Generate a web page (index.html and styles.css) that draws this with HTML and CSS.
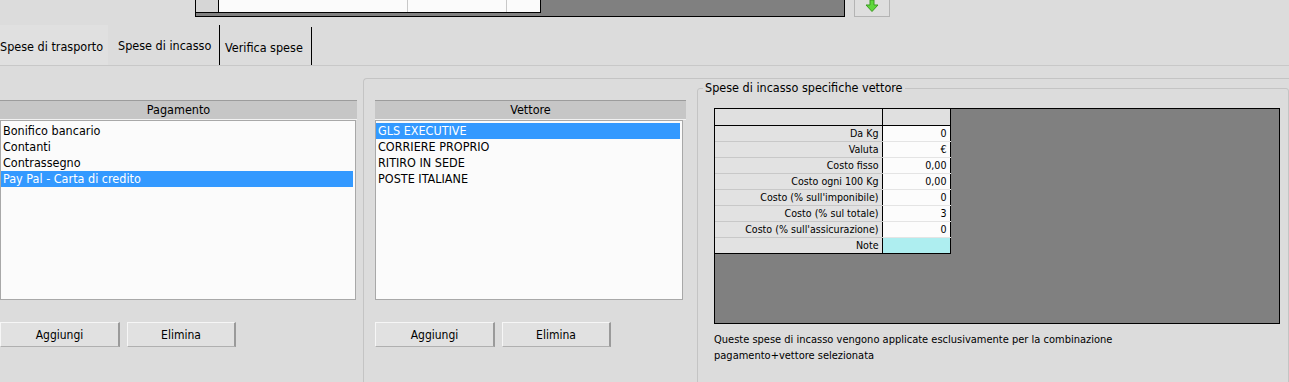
FILE: index.html
```html
<!DOCTYPE html>
<html lang="it">
<head>
    <meta charset="UTF-8">
    <title>Spese di incasso</title>
    <link rel="stylesheet" href="styles.css">
</head>
<body>

    <div class="top">
        <div class="top-grid">
            <div class="tg-row">
                <div class="tg-head"></div>
                <div class="tg-cell c1"></div>
                <div class="tg-cell c2"></div>
                <div class="tg-cell c3"></div>
            </div>
        </div>
        <button class="arrow-btn">
            <svg width="14" height="12" viewBox="0 0 14 12">
                <path d="M5 0 H9 V5 H13 L7 11.5 L1 5 H5 Z" fill="#5fd83c" stroke="#3c9a22" stroke-width="1"/>
            </svg>
        </button>
    </div>

    <div class="tabs">
        <div class="tab first">Spese di trasporto</div>
        <div class="tab active">Spese di incasso</div>
        <div class="tab last">Verifica spese</div>
    </div>

    <div class="content">
        <div class="pane left-pane">
            <div class="list-head">Pagamento</div>
            <ul class="list">
                <li>Bonifico bancario</li>
                <li>Contanti</li>
                <li>Contrassegno</li>
                <li class="selected">Pay Pal - Carta di credito</li>
            </ul>
            <div class="buttons">
                <button class="btn add">Aggiungi</button>
                <button class="btn del">Elimina</button>
            </div>
        </div>

        <div class="frame">
            <div class="pane mid-pane">
                <div class="list-head">Vettore</div>
                <ul class="list">
                    <li class="selected">GLS EXECUTIVE</li>
                    <li>CORRIERE PROPRIO</li>
                    <li>RITIRO IN SEDE</li>
                    <li>POSTE ITALIANE</li>
                </ul>
                <div class="buttons">
                    <button class="btn add">Aggiungi</button>
                    <button class="btn del">Elimina</button>
                </div>
            </div>

            <fieldset class="group">
                <legend>Spese di incasso specifiche vettore</legend>
                <div class="grid">
                    <table class="props">
                        <tr class="head"><td class="label"></td><td class="value"></td></tr>
                        <tr><td class="label">Da Kg</td><td class="value">0</td></tr>
                        <tr><td class="label">Valuta</td><td class="value">&euro;</td></tr>
                        <tr><td class="label">Costo fisso</td><td class="value">0,00</td></tr>
                        <tr><td class="label">Costo ogni 100 Kg</td><td class="value">0,00</td></tr>
                        <tr><td class="label">Costo (% sull'imponibile)</td><td class="value">0</td></tr>
                        <tr><td class="label">Costo (% sul totale)</td><td class="value">3</td></tr>
                        <tr><td class="label">Costo (% sull'assicurazione)</td><td class="value">0</td></tr>
                        <tr class="last"><td class="label">Note</td><td class="value note-cell"></td></tr>
                    </table>
                </div>
                <p class="note">Queste spese di incasso vengono applicate esclusivamente per la combinazione<br>pagamento+vettore selezionata</p>
            </fieldset>
        </div>
    </div>

</body>
</html>
```

FILE: styles.css
```css
* {
  margin: 0;
  padding: 0;
  box-sizing: border-box;
}
body {
  font-family: "DejaVu Sans Condensed", "DejaVu Sans", sans-serif;
  font-stretch: condensed;
  font-size: 11px;
  color: #000;
  background-color: #dcdcdc;
  width: 1289px;
  height: 382px;
  overflow: hidden;
}

/* grid cut at the top of the window */
.top {
  display: flex;
  align-items: flex-start;
  height: 25px;
}
.top-grid {
  margin-left: 195px;
  width: 650px;
  height: 17px;
  background-color: #808080;
  border: 1px solid #000;
  border-top: none;
}
.tg-row {
  display: flex;
  height: 13px;
  border-bottom: 1px solid #000;
  width: 345px;
}
.tg-head {
  width: 23px;
  background-color: #d6d6d6;
  border-right: 1px solid #000;
}
.tg-cell {
  background-color: #fbfbfb;
  border-right: 1px solid #c8c8c8;
}
.tg-cell.c1 { width: 189px; }
.tg-cell.c2 { width: 99px; }
.tg-cell.c3 { width: 34px; border-right-color: #000; }

.arrow-btn {
  margin-left: 9px;
  width: 36px;
  height: 17px;
  background-color: #dedede;
  border: 1px solid #b4b4b4;
  border-top: none;
  display: flex;
  justify-content: center;
  align-items: flex-start;
}

/* tabs */
.tabs {
  display: flex;
  height: 41px;
  border-bottom: 1px solid #c8c8c8;
}
.tab {
  height: 40px;
  display: flex;
  align-items: center;
  font-size: 12.5px;
  padding-top: 2px;
  white-space: nowrap;
}
.tab.first {
  width: 108px;
  background-color: #e0e0e0;
}
.tab.active {
  width: 112px;
  padding-left: 10px;
  padding-top: 0;
  border-right: 1px solid #000;
}
.tab.last {
  width: 92px;
  height: 38px;
  margin-top: 2px;
  padding-left: 5px;
  border-right: 1px solid #000;
}

/* panels */
.content {
  display: flex;
}
.left-pane {
  width: 356px;
  padding-top: 34px;
}
.frame {
  flex: 1;
  display: flex;
  margin-left: 7px;
  margin-top: 12px;
  height: 320px;
  border-top: 1px solid #c4c4c4;
  border-left: 1px solid #c4c4c4;
  border-top-left-radius: 4px;
}
.mid-pane {
  width: 322px;
  padding-left: 11px;
  padding-top: 21px;
}

.list-head {
  height: 20px;
  line-height: 18px;
  text-align: center;
  font-size: 12.5px;
  background-color: #c6c6c6;
  border-top: 1px solid #9c9c9c;
  border-bottom: 1px solid #f2f2f2;
}
.left-pane .list-head { width: 357px; }
.mid-pane .list-head { width: 311px; }

.list {
  list-style: none;
  height: 180px;
  background-color: #fbfbfb;
  border: 1px solid #a8a8a8;
  padding: 2px 2px 0 0;
  font-size: 12.5px;
}
.left-pane .list { width: 356px; }
.mid-pane .list { width: 308px; }
.list li {
  height: 16px;
  line-height: 16px;
  padding-left: 2px;
  white-space: nowrap;
}
.list li.selected {
  background-color: #3399ff;
  color: #fff;
}

.buttons {
  display: flex;
  gap: 7px;
  margin-top: 22px;
}
.btn {
  height: 25px;
  font-family: inherit;
  font-stretch: condensed;
  font-size: 12px;
  background-color: #e1e1e1;
  border: 1px solid;
  border-color: #f6f6f6 #9a9a9a #b0b0b0 #f6f6f6;
  border-right-width: 2px;
}
.btn.add { width: 120px; }
.btn.del { width: 109px; }

/* right group box */
.group {
  flex: 1;
  margin-left: 11px;
  margin-top: 1px;
  min-width: 0;
  height: 400px;
  border: 1px solid #c4c4c4;
  border-radius: 3px;
  padding: 12px 0 0 16px;
}
.group legend {
  font-size: 12.5px;
  line-height: 16px;
  margin-left: -11px;
  padding: 0 2px;
}
.grid {
  width: 566px;
  height: 216px;
  background-color: #808080;
  border: 1px solid #000;
}
.props {
  border-collapse: collapse;
  font-size: 10.6px;
}
.props td {
  height: 16px;
  line-height: 15px;
  padding: 0 3px 0 0;
  text-align: right;
  white-space: nowrap;
  border-bottom: 1px solid #c8c8c8;
}
.props td.label {
  width: 167px;
  background-color: #e2e2e2;
  border-right: 1px solid #000;
}
.props td.value {
  width: 68px;
  background-color: #fcfcfc;
  border-right: 1px solid #000;
  border-bottom-color: #e4e4e4;
}
.props tr.head td {
  background-color: #e0e0e0;
  border-bottom: 1px solid #000;
}
.props tr.last td {
  border-bottom: 1px solid #000;
}
.props td.note-cell {
  background-color: #aeeef0;
}
.note {
  margin-top: 8px;
  line-height: 16px;
  font-size: 11px;
}
```
